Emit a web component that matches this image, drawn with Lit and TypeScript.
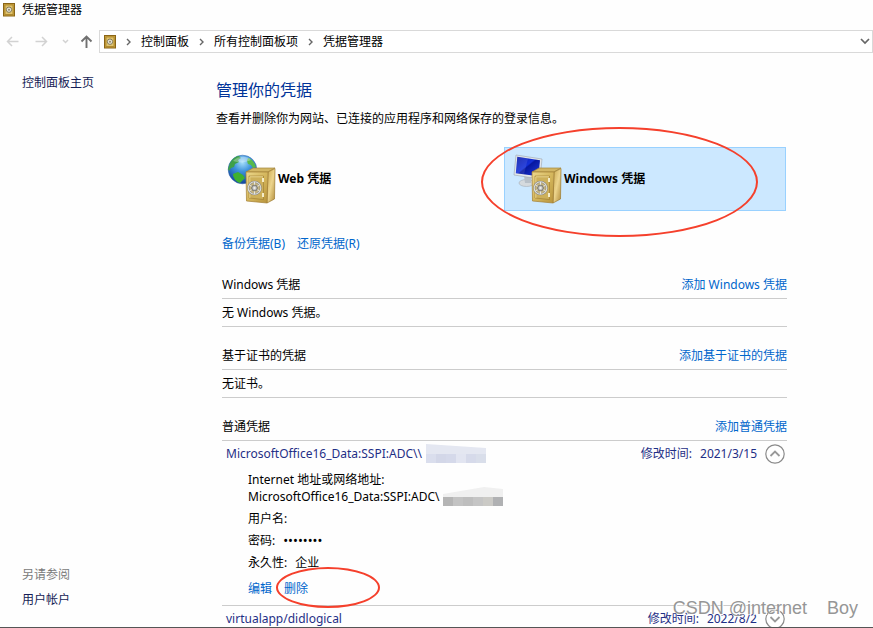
import { LitElement, html, css, svg, nothing } from "lit";
import { customElement, property } from "lit/decorators.js";

const safe = svg`
  <defs>
    <linearGradient id="front" x1="0" y1="0" x2="1" y2="1">
      <stop offset="0" stop-color="#ecd88c" />
      <stop offset="0.5" stop-color="#d4b65c" />
      <stop offset="1" stop-color="#b8943c" />
    </linearGradient>
    <linearGradient id="side" x1="0" y1="0" x2="1" y2="1">
      <stop offset="0" stop-color="#c9a850" />
      <stop offset="0.5" stop-color="#ecd48c" />
      <stop offset="1" stop-color="#b08a38" />
    </linearGradient>
    <radialGradient id="dial">
      <stop offset="0" stop-color="#ffffff" />
      <stop offset="0.6" stop-color="#b9b9b5" />
      <stop offset="1" stop-color="#77756c" />
    </radialGradient>
  </defs>
  <path d="M18 17 25 13 47 13 40 17Z" fill="#d2b664" stroke="#a5863a" stroke-width=".7" />
  <path d="M40 17 47 13.500 46.500 44 39 48Z" fill="url(#side)" stroke="#9c7a2e" stroke-width=".7" />
  <path d="M18 17H40L39 48 18.500 46Z" fill="url(#front)" stroke="#a38035" stroke-width=".7" />
  <path d="M21 21H35.500V44.500L21 43Z" fill="#cdb05a" stroke="#9a7a30" stroke-width=".6" />
  <path d="M21.800 43V21.800H35" fill="none" stroke="#f1df9c" stroke-width=".8" />
  <path d="M35 23v4M35 38v4" stroke="#f4ecc9" stroke-width="2" />
  <circle cx="26.500" cy="33" r="6.300" fill="#c4b481" stroke="#85837a" stroke-width="2" />
  <circle cx="26.500" cy="33" r="6.300" fill="none" stroke="#deded9" stroke-width="1.100" />
  <path d="M26.500 27v12M21.300 30l10.400 6M31.700 30l-10.400 6" stroke="#e6e6e2" stroke-width="1" />
  <circle cx="26.500" cy="33" r="3" fill="url(#dial)" stroke="#77756c" stroke-width=".5" />
`;

const globe = svg`
  <defs>
    <radialGradient id="sea" cx=".5" cy=".25" r=".8">
      <stop offset="0" stop-color="#a8e0fa" />
      <stop offset="0.4" stop-color="#3d92dc" />
      <stop offset="1" stop-color="#0d3a94" />
    </radialGradient>
  </defs>
  <circle cx="14.500" cy="14.500" r="14.300" fill="url(#sea)" stroke="#2b5fa8" stroke-width=".5" />
  <path d="M2 8C5 3 8 1 11 1l2 2-3 2 1 2-4 2-1 3-3 1-2 3-1-2Z" fill="#3fa04a" />
  <path d="M5 19l5-2 5 3 2 3-3 3-2 2C8 27 5 23 5 19Z" fill="#3fb030" />
  <path d="M20 3c4 1 7 5 8 9l-3 1-2-3-3-1-1-3Z" fill="#58b94a" />
  <path d="M5 6c4-5 14-6 18-1-6 3-12 3-18 1Z" fill="#fff" opacity=".3" />
`;

const monitor = svg`
  <defs>
    <linearGradient id="screen" x1="0" y1="0" x2="1" y2="1">
      <stop offset="0" stop-color="#0a1aa8" />
      <stop offset="0.45" stop-color="#1430d8" />
      <stop offset="0.5" stop-color="#0617a0" />
      <stop offset="1" stop-color="#1e3cdc" />
    </linearGradient>
  </defs>
  <ellipse cx="12.500" cy="28" rx="7.500" ry="3.500" fill="#d5dade" stroke="#a4adb5" stroke-width=".6" />
  <path d="M10 21h7v7h-6Z" fill="#b8c0c8" />
  <path d="M2 0 28 4 26 24 0 20Z" fill="#e3e7ea" stroke="#9ba5ae" stroke-width=".6" />
  <path d="M3.300 1.800 26 5.300 24.400 21.300 1.800 18.300Z" fill="url(#screen)" />
  <path d="M3.300 1.800 14 3.500 10 19.400 1.800 18.300Z" fill="#fff" opacity=".1" />
`;

const smallSafe = html`<svg class="small-safe" viewBox="0 0 12 14" aria-hidden="true">
  <rect x=".5" y=".5" width="11" height="12.500" fill="#c9a23c" stroke="#8a6516" />
  <rect x="2" y="2" width="8" height="9.500" fill="#e0c36c" stroke="#a57f28" stroke-width=".8" />
  <circle cx="6" cy="6.700" r="2.700" fill="#e8e4d4" stroke="#7d7350" stroke-width=".9" />
  <circle cx="6" cy="6.700" r="1" fill="#8f8668" />
</svg>`;

const crumbArrow = html`<svg class="crumb-arrow" viewBox="0 0 5 8" aria-hidden="true">
  <path d="M1 1 4 4 1 7" fill="none" stroke="#666" stroke-width="1.400" />
</svg>`;

@customElement("vault-tile")
export class VaultTile extends LitElement {
  @property() label = "";
  @property() kind = "web";
  @property({ type: Boolean }) selected = false;

  static styles = css`
    :host { display: block; position: relative; }
    .tile {
      box-sizing: border-box; width: 100%; height: 64px; padding: 0 9px;
      display: flex; align-items: center; gap: 2px;
      border: 1px solid transparent; background: none; color: #000;
      font: bold 12px/16px "Noto Sans", "Noto Sans CJK SC", sans-serif;
      text-align: left;
    }
    .selected { background: #cce8ff; border-color: #99d1ff; }
    .icon { width: 48px; height: 48px; flex: none; overflow: visible; }
    .ring {
      position: absolute; left: -23px; top: -20px; width: 277px; height: 110px;
      box-sizing: border-box; border: 2px solid #f5402c; border-radius: 50%;
      pointer-events: none;
    }
  `;

  render() {
    return html`<button class="tile ${this.selected ? "selected" : ""}" aria-pressed=${this.selected}>
        <svg class="icon" viewBox="0 0 48 48" aria-hidden="true">
          ${this.kind === "web" ? globe : monitor}${safe}
        </svg>
        <span>${this.label}</span>
      </button>
      ${this.selected ? html`<div class="ring"></div>` : nothing}`;
  }
}

@customElement("app-root")
export class AppRoot extends LitElement {
  static styles = css`
    :host {
      display: flex; flex-direction: column; position: relative;
      height: 100vh; overflow: hidden; box-sizing: border-box;
      border-bottom: 1px solid #555; background: #fefefe; color: #000;
      font: 12px/16px "Noto Sans", "Noto Sans CJK SC", sans-serif;
    }
    a { color: #0066cc; text-decoration: none; }
    h1, h2, p, dl, dd, dt, ol { margin: 0; padding: 0; font-weight: normal; }
    h2 { font-size: 12px; }
    button { font: inherit; padding: 0; border: 0; background: none; display: flex; align-items: center; justify-content: center; }
    .small-safe { width: 12px; height: 14px; flex: none; }

    .title { display: flex; align-items: center; gap: 7px; height: 20px; padding: 0 3px 10px; }
    .toolbar { display: flex; align-items: center; height: 23px; }
    .arrows { display: flex; align-items: center; width: 99px; flex: none; padding-left: 6px; box-sizing: border-box; }
    .nav { width: 13px; height: 13px; margin-right: 16px; }
    .nav.more { width: 7px; margin-right: 11px; margin-left: -2px; }
    .nav.up { margin-right: 0; }
    .nav svg { width: 100%; height: 100%; flex: none; }
    .address {
      flex: 1; display: flex; align-items: center; height: 23px; box-sizing: border-box;
      border: 1px solid #d9d9d9; padding: 0 2px 0 4px; background: #fff;
    }
    .crumbs { flex: 1; display: flex; align-items: center; list-style: none; margin-left: 10px; }
    .crumbs li { display: flex; align-items: center; }
    .crumbs a { color: #000; margin: 0 10px; }
    .crumb-arrow { width: 5px; height: 8px; }
    .drop svg { width: 10px; height: 7px; }

    .body { flex: 1; min-height: 0; display: grid; grid-template-columns: 216px minmax(0, 1fr); }
    .side { display: flex; flex-direction: column; padding: 22px 22px; }
    .side a { color: #151c55; }
    .side .also { margin-top: auto; margin-bottom: 9px; color: #7a7a7a; }
    .main { padding: 25px 86px 0 0; min-width: 0; }
    h1 { font-size: 16px; line-height: 24px; color: #003399; }
    .intro { margin-top: 9px; }
    .tiles { display: grid; grid-template-columns: 1fr 1fr; gap: 4px; margin: 20px 1px 25px 2px; }
    .content { padding-left: 6px; }
    .links { display: flex; gap: 12px; margin-bottom: 25px; }
    section + section { margin-top: 21px; }
    .head { display: flex; justify-content: space-between; padding-bottom: 5px; border-bottom: 1px solid #ccc; }
    .empty { padding: 6px 0 5px; border-bottom: 1px solid #ccc; }
    .row { display: flex; align-items: center; box-sizing: border-box; height: 24px; padding: 2px 2px 0 4px; color: #1f2f86; }
    .row .name { flex: 1; display: flex; align-items: center; }
    .row time { margin: 0 8px; }
    .round { width: 20px; height: 20px; }
    .round svg { width: 20px; height: 20px; flex: none; }
    .mask { width: 61px; height: 20px; flex: none; margin-left: 3px; }
    .masked { display: flex; align-items: center; height: 17px; }
    .details { display: flex; flex-direction: column; gap: 5px; padding: 6px 26px 8px; line-height: 17px; border-bottom: 1px solid #ccc; }
    .details > div { display: flex; gap: 8px; }
    .details > .stack { display: block; }
    .secret { font-size: 13px; }
    .actions a { position: relative; }
    .details > .actions { gap: 12px; margin-top: 4px; }
    .ring {
      position: absolute; left: -8px; top: -13px; width: 104px; height: 41px;
      box-sizing: border-box; border: 2px solid #f5402c; border-radius: 50%; pointer-events: none;
    }
    .watermark {
      position: absolute; right: 15px; bottom: 8px; white-space: pre;
      font: 18px/22px "Liberation Sans", sans-serif; color: #969696;
      text-shadow: 1px 1px 0 #fff; pointer-events: none;
    }
  `;

  private crumbs = ["控制面板", "所有控制面板项", "凭据管理器"];

  private mask(colors: string[], fade: string, shape: string) {
    return html`<svg class="mask" viewBox="0 0 61 20" aria-hidden="true">
      <path d=${shape} fill=${fade} />
      ${colors.map((c, i) => svg`<rect x=${1 + i * 10} y="10" width="10" height=${9} fill=${c} />`)}
    </svg>`;
  }

  private round(open: boolean) {
    return html`<button class="round" aria-label=${open ? "折叠" : "展开"}>
      <svg viewBox="0 0 20 20" aria-hidden="true">
        <circle cx="10" cy="10" r="9.200" fill="#fff" stroke="#8a8a8a" stroke-width="1.200" />
        <path d=${open ? "M5.500 12 10 7.500 14.500 12" : "M5.500 8 10 12.500 14.500 8"} fill="none" stroke="#999" stroke-width="1.800" />
      </svg>
    </button>`;
  }

  private head(title: string, add: string) {
    return html`<div class="head"><h2>${title}</h2><a href="#">${add}</a></div>`;
  }

  render() {
    return html`
      <header>
        <div class="title">${smallSafe}<span>凭据管理器</span></div>
        <div class="toolbar">
          <div class="arrows">
            <button class="nav" aria-label="后退"><svg viewBox="0 0 13 13"><path d="M12.500 6.500H1.500M6 2 1.500 6.500 6 11" fill="none" stroke="#d2d2d2" stroke-width="1.500" /></svg></button>
            <button class="nav" aria-label="前进"><svg viewBox="0 0 13 13"><path d="M.5 6.500H11.500M7 2l4.500 4.500L7 11" fill="none" stroke="#d2d2d2" stroke-width="1.500" /></svg></button>
            <button class="nav more" aria-label="最近位置"><svg viewBox="0 0 7 13"><path d="M1 5 3.500 7.500 6 5" fill="none" stroke="#d2d2d2" stroke-width="1.500" /></svg></button>
            <button class="nav up" aria-label="向上"><svg viewBox="0 0 13 13"><path d="M6.500 13V1.500M1.500 6.500l5-5 5 5" fill="none" stroke="#707070" stroke-width="1.900" /></svg></button>
          </div>
          <nav class="address" aria-label="地址">
            ${smallSafe}
            <ol class="crumbs">
              ${this.crumbs.map((c) => html`<li>${crumbArrow}<a href="#">${c}</a></li>`)}
            </ol>
            <button class="drop" aria-label="历史记录"><svg viewBox="0 0 10 7"><path d="M1 1 5 5 9 1" fill="none" stroke="#666" stroke-width="1.700" /></svg></button>
          </nav>
        </div>
      </header>
      <div class="body">
        <aside class="side">
          <a href="#">控制面板主页</a>
          <span class="also">另请参阅</span>
          <a href="#">用户帐户</a>
        </aside>
        <main class="main">
          <h1>管理你的凭据</h1>
          <p class="intro">查看并删除你为网站、已连接的应用程序和网络保存的登录信息。</p>
          <div class="tiles">
            <vault-tile label="Web 凭据" kind="web"></vault-tile>
            <vault-tile label="Windows 凭据" kind="windows" selected></vault-tile>
          </div>
          <div class="content">
            <div class="links"><a href="#">备份凭据(B)</a><a href="#">还原凭据(R)</a></div>
            <section>
              ${this.head("Windows 凭据", "添加 Windows 凭据")}
              <p class="empty">无 Windows 凭据。</p>
            </section>
            <section>
              ${this.head("基于证书的凭据", "添加基于证书的凭据")}
              <p class="empty">无证书。</p>
            </section>
            <section>
              ${this.head("普通凭据", "添加普通凭据")}
              <div class="row">
                <span class="name">MicrosoftOffice16_Data:SSPI:ADC\\\\${this.mask(
                  ["#dadeed", "#d3d7e8", "#d5d9ea", "#e2e5f1", "#d6daea", "#d9deea"], "#e4e7f1", "M1 0 61 4V19H1Z")}</span>
                <span>修改时间:</span><time>2021/3/15</time>${this.round(true)}
              </div>
              <dl class="details">
                <div class="stack">
                  <dt>Internet 地址或网络地址:</dt>
                  <dd class="masked">MicrosoftOffice16_Data:SSPI:ADC\\${this.mask(
                    ["#b5b5b5", "#c3c3c3", "#bebebe", "#c5c5c5", "#cbcac6", "#b0b1b3"], "#f0f0f0", "M1 7 42 0 61 2V19H1Z")}</dd>
                </div>
                <div><dt>用户名:</dt><dd></dd></div>
                <div><dt>密码:</dt><dd class="secret">••••••••</dd></div>
                <div><dt>永久性:</dt><dd>企业</dd></div>
                <div class="actions"><a href="#">编辑</a><a href="#">删除<span class="ring"></span></a></div>
              </dl>
              <div class="row">
                <span class="name">virtualapp/didlogical</span>
                <span>修改时间:</span><time>2022/8/2</time>${this.round(false)}
              </div>
            </section>
          </div>
        </main>
      </div>
      <div class="watermark">CSDN @internet    Boy</div>
    `;
  }
}
